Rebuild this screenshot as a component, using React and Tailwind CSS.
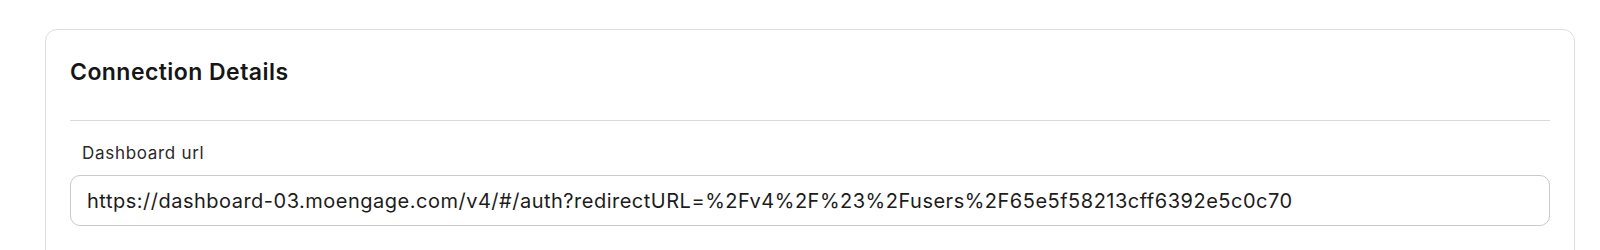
import { useState } from 'react';

const DASHBOARD_URL =
  'https://dashboard-03.moengage.com/v4/#/auth?redirectURL=%2Fv4%2F%23%2Fusers%2F65e5f58213cff6392e5c0c70';

export default function App() {
  const [url, setUrl] = useState(DASHBOARD_URL);

  return (
    <div
      className="min-h-screen bg-white pt-[29px] pl-[45px] pr-[25px]"
      style={{ fontFamily: 'Inter, "Noto Sans", sans-serif' }}
    >
      {/* Card */}
      <div className="rounded-[12px] border border-[#dedede] bg-white px-6 pb-10">
        <h2 className="pt-[28px] pb-[34px] text-[23px] leading-[28px] font-semibold tracking-[0.45px] text-[#161616]">
          Connection Details
        </h2>
        <div className="h-px bg-[#d9d9d9]" />

        {/* Field */}
        <div className="pt-[21px]">
          <label className="block pl-[12px] text-[17px] leading-[22px] tracking-[0.7px] text-[#2a2a2a]">
            Dashboard url
          </label>
          <input
            value={url}
            onChange={(e) => setUrl(e.target.value)}
            className="mt-[11px] block h-[51px] w-full rounded-[10px] border border-[#cacaca] bg-white px-[16px] text-[20px] tracking-[0.5px] text-[#1c1c1c] outline-none"
          />
        </div>
      </div>
    </div>
  );
}
